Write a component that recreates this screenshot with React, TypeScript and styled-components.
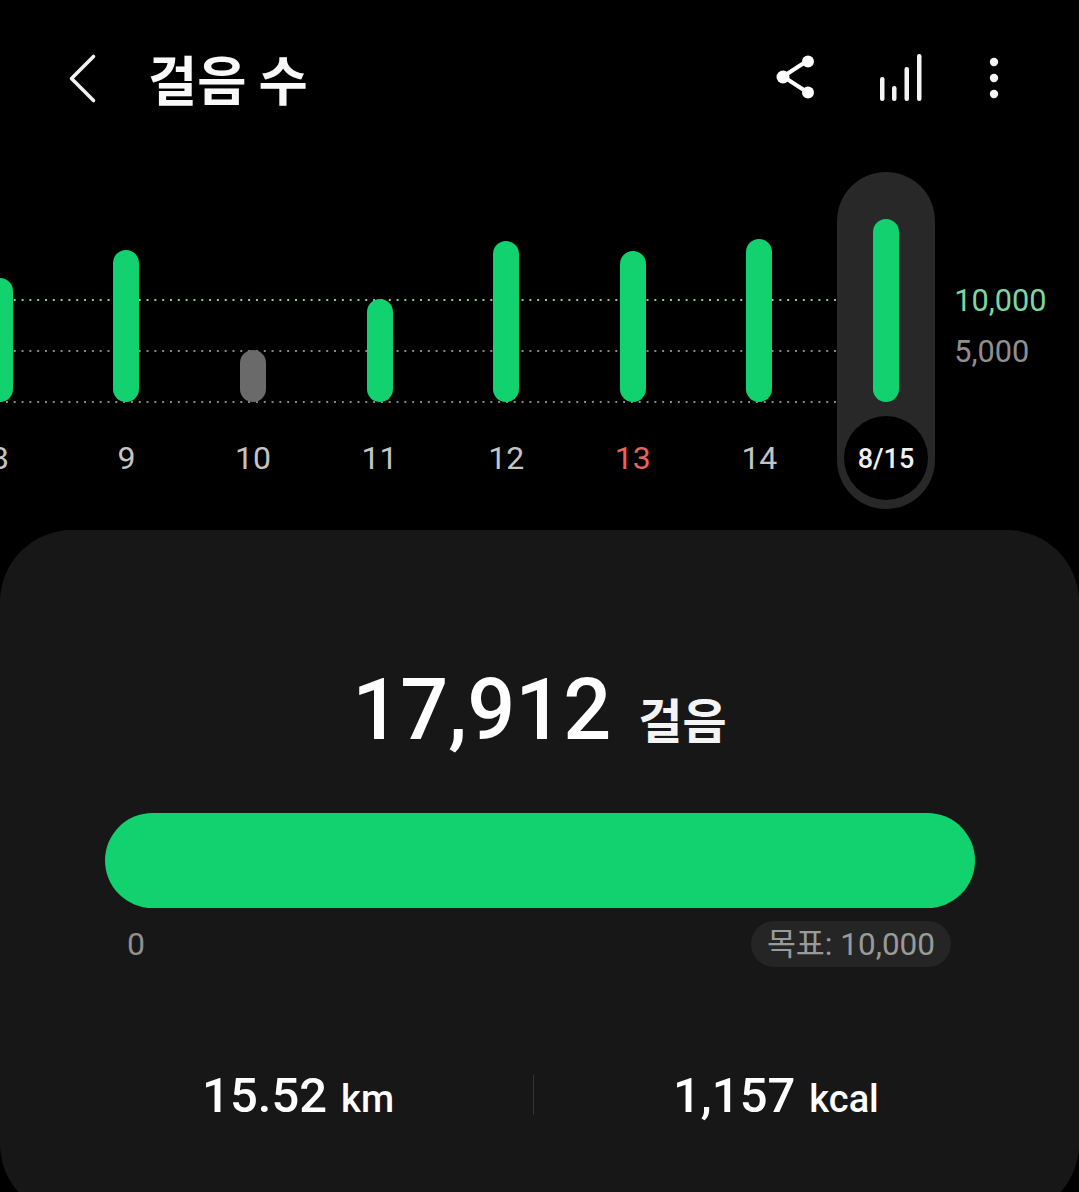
import styled, { createGlobalStyle } from "styled-components";

const COLORS = {
  green: "#12d26f",
  sheet: "#171717",
  pill: "#282828",
  chip: "#252525",
  gray: "#8f8f8f",
  label: "#c4c4c4",
  red: "#e8635f",
  goalGreen: "#7ed69f",
};

const DAYS = [
  { label: "8", top: 106, tone: "green" },
  { label: "9", top: 78, tone: "green" },
  { label: "10", top: 178, tone: "gray" },
  { label: "11", top: 127, tone: "green" },
  { label: "12", top: 69, tone: "green" },
  { label: "13", top: 79, tone: "green", holiday: true },
  { label: "14", top: 67, tone: "green" },
  { label: "8/15", top: 47, tone: "green", active: true },
];

const GlobalStyle = createGlobalStyle`
  html, body {
    margin: 0;
    padding: 0;
    background: #000;
  }
  body {
    font-family: Roboto, "Noto Sans CJK KR", sans-serif;
  }
`;

export default function App() {
  return (
    <>
      <GlobalStyle />
      <Page>
        <Header>
          <BackIcon viewBox="0 0 34 54">
            <path d="M27.5 5.5 L5.5 27.5 L27.5 49.5" />
          </BackIcon>
          <Title>걸음 수</Title>
          <Actions>
            <ShareIcon width="44" height="44" viewBox="0 0 44 44" fill="#fff">
              <path d="M33 6 L9 21.5 L33 37" fill="none" stroke="#fff" strokeWidth="4" />
              <circle cx="34" cy="6.5" r="6" />
              <circle cx="9" cy="22" r="6.5" />
              <circle cx="34" cy="37.5" r="6" />
            </ShareIcon>
            <BarsIcon width="48" height="50" viewBox="0 0 48 50" fill="#f4f4f4">
              <rect x="4" y="25" width="4.5" height="24" rx="2.2" />
              <rect x="16" y="34" width="4.5" height="15" rx="2.2" />
              <rect x="28.5" y="15" width="4.5" height="34" rx="2.2" />
              <rect x="41" y="2" width="4.5" height="47" rx="2.2" />
            </BarsIcon>
            <DotsIcon width="14" height="44" viewBox="0 0 14 44" fill="#f4f4f4">
              <circle cx="7" cy="6" r="4.2" />
              <circle cx="7" cy="22" r="4.2" />
              <circle cx="7" cy="38" r="4.2" />
            </DotsIcon>
          </Actions>
        </Header>

        <Chart>
          <Plot>
            <GridLine $top={127} $color={COLORS.goalGreen} />
            <GridLine $top={178} $color="#8a8a8a" />
            <GridLine $top={229} $color="#8a8a8a" />
            {DAYS.map((day) => (
              <Column key={day.label}>
                <Track $active={day.active}>
                  <BarSlot>
                    <Bar $top={day.top} $gray={day.tone === "gray"} />
                  </BarSlot>
                  <DayLabel $active={day.active} $holiday={day.holiday}>
                    {day.label}
                  </DayLabel>
                </Track>
              </Column>
            ))}
          </Plot>
          <Axis>
            <AxisValue $goal>10,000</AxisValue>
            <AxisValue>5,000</AxisValue>
          </Axis>
        </Chart>

        <Sheet>
          <Total>
            <TotalValue>17,912</TotalValue>
            <TotalUnit>걸음</TotalUnit>
          </Total>
          <Progress />
          <ProgressLegend>
            <span>0</span>
            <GoalChip>목표: 10,000</GoalChip>
          </ProgressLegend>
          <Stats>
            <Stat $side="left">
              <StatValue>15.52</StatValue>
              <StatUnit>km</StatUnit>
            </Stat>
            <Divider />
            <Stat $side="right">
              <StatValue>1,157</StatValue>
              <StatUnit>kcal</StatUnit>
            </Stat>
          </Stats>
        </Sheet>
      </Page>
    </>
  );
}

const Page = styled.div`
  width: 1079px;
  height: 1192px;
  overflow: hidden;
  background: #000;
  color: #fff;
`;

const Header = styled.header`
  height: 172px;
  box-sizing: border-box;
  padding: 51px 78px 0 66px;
  display: flex;
  align-items: flex-start;
`;

const BackIcon = styled.svg`
  width: 34px;
  height: 54px;
  fill: none;
  stroke: #f2f2f2;
  stroke-width: 3.6;
  stroke-linecap: round;
  stroke-linejoin: round;
`;

const Title = styled.h1`
  margin: -8px 0 0 48px;
  font-family: "Noto Sans CJK KR", sans-serif;
  font-size: 53.5px;
  line-height: 70px;
  font-weight: 700;
  color: #f8f8f8;
`;

const Actions = styled.div`
  margin-left: auto;
  display: flex;
  align-items: flex-start;
`;

const ShareIcon = styled.svg`
  margin-top: 4px;
`;

const BarsIcon = styled.svg`
  margin: 1px 0 0 58px;
`;

const DotsIcon = styled.svg`
  margin-left: 63px;
  margin-top: 5px;
`;

const Chart = styled.section`
  display: flex;
  height: 358px;
`;

const Plot = styled.div`
  position: relative;
  display: flex;
  flex: none;
  margin-left: -63.5px;
  height: 337px;
`;

const GridLine = styled.div<{ $top: number; $color: string }>`
  position: absolute;
  top: ${(p) => p.$top}px;
  left: 0;
  right: 63px;
  height: 2px;
  background-image: radial-gradient(circle at center, ${(p) => p.$color} 0 1px, transparent 1.2px);
  background-size: 7.82px 2px;
  background-position-x: -4.3px;
`;

const Column = styled.div`
  position: relative;
  width: 126.6px;
  display: flex;
  justify-content: center;
`;

const Track = styled.div<{ $active?: boolean }>`
  width: 98px;
  height: 337px;
  box-sizing: border-box;
  padding-bottom: 9px;
  border-radius: 49px;
  background: ${(p) => (p.$active ? COLORS.pill : "transparent")};
  display: flex;
  flex-direction: column;
  align-items: center;
`;

const BarSlot = styled.div`
  height: 230px;
  flex: none;
`;

const Bar = styled.div<{ $top: number; $gray?: boolean }>`
  width: 26px;
  height: ${(p) => 230 - p.$top}px;
  margin-top: ${(p) => p.$top}px;
  border-radius: 13px;
  background: ${(p) => (p.$gray ? "#6a6a6a" : COLORS.green)};
`;

const DayLabel = styled.div<{ $active?: boolean; $holiday?: boolean }>`
  width: 84px;
  height: 84px;
  box-sizing: border-box;
  padding-top: ${(p) => (p.$active ? 1 : 0)}px;
  margin-top: 14px;
  border-radius: 50%;
  background: ${(p) => (p.$active ? "#000" : "transparent")};
  display: flex;
  align-items: center;
  justify-content: center;
  font-size: ${(p) => (p.$active ? 27 : 32)}px;
  font-weight: ${(p) => (p.$active ? 500 : 400)};
  color: ${(p) =>
    p.$active ? "#f0f0f0" : p.$holiday ? COLORS.red : COLORS.label};
`;

const Axis = styled.div`
  margin-left: 5px;
  padding-top: 110px;
  display: flex;
  flex-direction: column;
  gap: 13px;
`;

const AxisValue = styled.div<{ $goal?: boolean }>`
  font-size: 30.7px;
  line-height: 38px;
  color: ${(p) => (p.$goal ? COLORS.goalGreen : COLORS.gray)};
`;

const Sheet = styled.main`
  height: 686px;
  box-sizing: border-box;
  padding: 131px 104px 0 105px;
  border-radius: 72px;
  background: ${COLORS.sheet};
`;

const Total = styled.div`
  display: flex;
  justify-content: center;
  align-items: baseline;
  gap: 27px;
  height: 100px;
  padding-right: 1px;
`;

const TotalValue = styled.span`
  font-size: 84.5px;
  line-height: 100px;
  font-weight: 500;
  color: #fff;
`;

const TotalUnit = styled.span`
  font-family: "Noto Sans CJK KR", sans-serif;
  font-size: 48px;
  font-weight: 700;
  color: #f4f4f4;
`;

const Progress = styled.div`
  height: 95px;
  margin-top: 52px;
  border-radius: 48px;
  background: ${COLORS.green};
`;

const ProgressLegend = styled.div`
  margin-top: 13px;
  padding: 0 24px 0 22px;
  display: flex;
  align-items: center;
  justify-content: space-between;
  font-size: 32px;
  color: ${COLORS.gray};
`;

const GoalChip = styled.span`
  height: 46px;
  box-sizing: border-box;
  padding: 0 16px 6px 16px;
  border-radius: 23px;
  background: ${COLORS.chip};
  display: flex;
  align-items: center;
  font-size: 31.5px;
  color: #9a9a9a;
`;

const Stats = styled.div`
  margin: 104px -105px 0 -105px;
  display: grid;
  grid-template-columns: 533px 1px 1fr;
  align-items: center;
`;

const Stat = styled.div<{ $side: "left" | "right" }>`
  display: flex;
  justify-content: ${(p) => (p.$side === "left" ? "flex-end" : "flex-start")};
  padding: ${(p) => (p.$side === "left" ? "0 139px 0 0" : "0 0 0 139px")};
  align-items: baseline;
  gap: 14px;
  height: 50px;
`;

const StatValue = styled.span`
  font-size: 49px;
  line-height: 50px;
  font-weight: 500;
`;

const StatUnit = styled.span`
  font-size: 38px;
  font-weight: 500;
`;

const Divider = styled.div`
  width: 1px;
  height: 40px;
  margin-top: -2px;
  background: #333;
`;
